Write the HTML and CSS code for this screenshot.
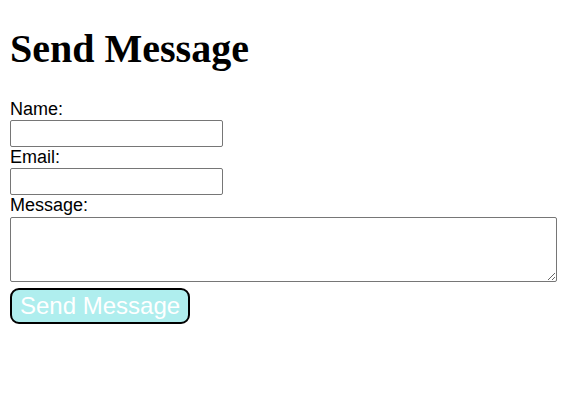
FILE: index.html
```html
<!DOCTYPE html>
<html>
<head>
<meta charset="utf-8">
<link rel="stylesheet" href="styles.css">
</head>
<body>
<h1 class="title">Send Message</h1>
<form class="form">
  <label class="label" for="name">Name:</label>
  <input class="field" id="name" type="text">
  <label class="label" for="email">Email:</label>
  <input class="field" id="email" type="email">
  <label class="label" for="msg">Message:</label>
  <textarea class="area" id="msg"></textarea>
  <button class="send" type="button">Send Message</button>
</form>
</body>
</html>
```

FILE: styles.css
```css
body {
  margin: 10px;
  background: #fff;
  color: #000;
}
.title {
  font-family: "Liberation Serif", "Times New Roman", serif;
  font-size: 40px;
  font-weight: bold;
  margin: 16px 0 27px;
  line-height: 46px;
}
.form {
  display: flex;
  flex-direction: column;
  align-items: flex-start;
  font-family: "Liberation Sans", Arial, sans-serif;
}
.label {
  font-size: 18px;
  line-height: 21px;
  height: 21px;
}
.field {
  box-sizing: border-box;
  width: 213px;
  height: 27px;
  margin: 0;
  border: 1px solid #767676;
  border-radius: 2px;
  padding: 1px 2px;
  font: 18px "Liberation Sans", Arial, sans-serif;
}
.area {
  box-sizing: border-box;
  width: 100%;
  height: 65px;
  margin: 1px 0 0;
  border: 1px solid #767676;
  border-radius: 2px;
  padding: 2px;
  font: 16px "Liberation Mono", monospace;
}
.send {
  box-sizing: border-box;
  margin-top: 6px;
  height: 36px;
  padding: 0 8px;
  background: #afeeee;
  color: #fff;
  border: 2px solid #000;
  border-radius: 9px;
  font: 24px "Liberation Sans", Arial, sans-serif;
  line-height: 30px;
}
```
